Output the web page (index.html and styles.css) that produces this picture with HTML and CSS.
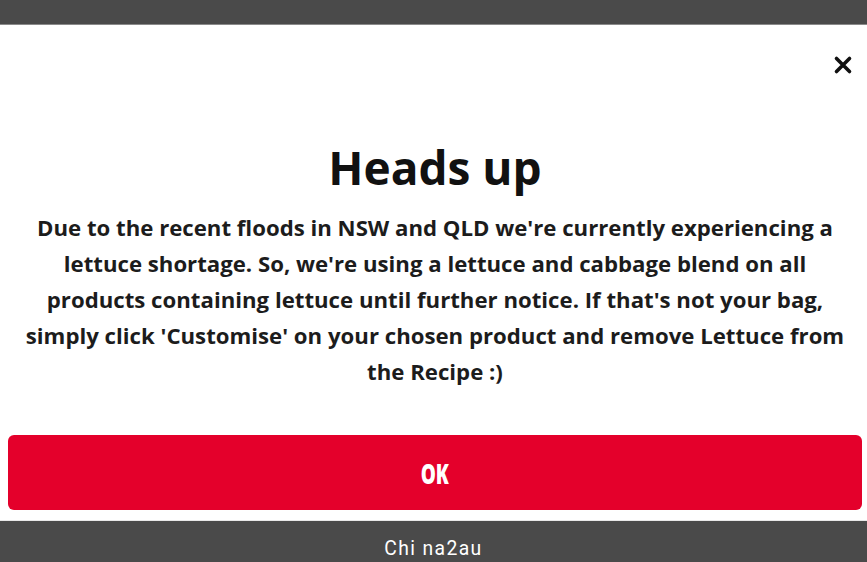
FILE: index.html
```html
<!DOCTYPE html>
<html lang="en">
  <head>
    <meta charset="UTF-8" />
    <meta name="viewport" content="width=device-width, initial-scale=1.0" />
    <title>Heads up</title>
    <link rel="stylesheet" href="styles.css">
  </head>
  <body>
    <div class="backdrop top"></div>

    <main class="modal">
      <div class="modal-head">
        <button class="close" aria-label="Close">
          <svg width="20" height="20" viewBox="0 0 20 20">
            <path d="M3.5 3.5 L16.5 16.5 M16.5 3.5 L3.5 16.5" stroke="#111" stroke-width="3.6" stroke-linecap="round" fill="none" />
          </svg>
        </button>
      </div>

      <h1>Heads up</h1>
      <p>
        Due to the recent floods in NSW and QLD we're currently experiencing a<br>
        lettuce shortage. So, we're using a lettuce and cabbage blend on all<br>
        products containing lettuce until further notice. If that's not your bag,<br>
        simply click 'Customise' on your chosen product and remove Lettuce from<br>
        the Recipe :)
      </p>

      <button class="ok"><span>OK</span></button>
    </main>

    <div class="backdrop bottom">
      <span class="mark">Chi na2au</span>
    </div>
  </body>
</html>
```

FILE: styles.css
```css
html, body {
  margin: 0;
  height: 100%;
}

body {
  display: flex;
  flex-direction: column;
  background: #4a4a4a;
  font-family: "Open Sans", "DejaVu Sans", sans-serif;
  overflow: hidden;
}

.backdrop {
  background: #4a4a4a;
}

.backdrop.top {
  height: 24px;
  border-bottom: 1px solid #8a8a8a;
}

.backdrop.bottom {
  flex: 1;
  display: flex;
  justify-content: center;
  align-items: center;
  border-top: 1px solid #e8e8e8;
}

.mark {
  display: inline-block;
  color: #fff;
  font-family: "Roboto", "DejaVu Sans", sans-serif;
  font-size: 21px;
  letter-spacing: 1.5px;
  padding-top: 12px;
  transform: scaleX(0.92);
}

.modal {
  background: #fff;
  padding: 0 5px 10px 8px;
  display: flex;
  flex-direction: column;
  align-items: center;
}

.modal-head {
  align-self: stretch;
  display: flex;
  justify-content: flex-end;
  padding: 29px 8px 0 0;
}

.close {
  border: 0;
  background: none;
  padding: 0;
  width: 22px;
  height: 22px;
  display: flex;
  align-items: center;
  justify-content: center;
}

h1 {
  margin: 63px 0 0;
  font-size: 46px;
  font-weight: 700;
  color: #111;
  line-height: 56px;
}

p {
  margin: 15px 0 0;
  text-align: center;
  font-size: 22.2px;
  font-weight: 700;
  line-height: 36px;
  color: #1c1c1c;
  white-space: nowrap;
}

.ok {
  align-self: stretch;
  margin-top: 45px;
  height: 75px;
  border: 0;
  border-radius: 6px;
  background: #e4002b;
  color: #fff;
  font-family: "Open Sans", "DejaVu Sans", sans-serif;
  font-weight: 800;
  font-size: 28px;
}

.ok span {
  display: inline-block;
  transform: scaleX(0.68);
}
```
